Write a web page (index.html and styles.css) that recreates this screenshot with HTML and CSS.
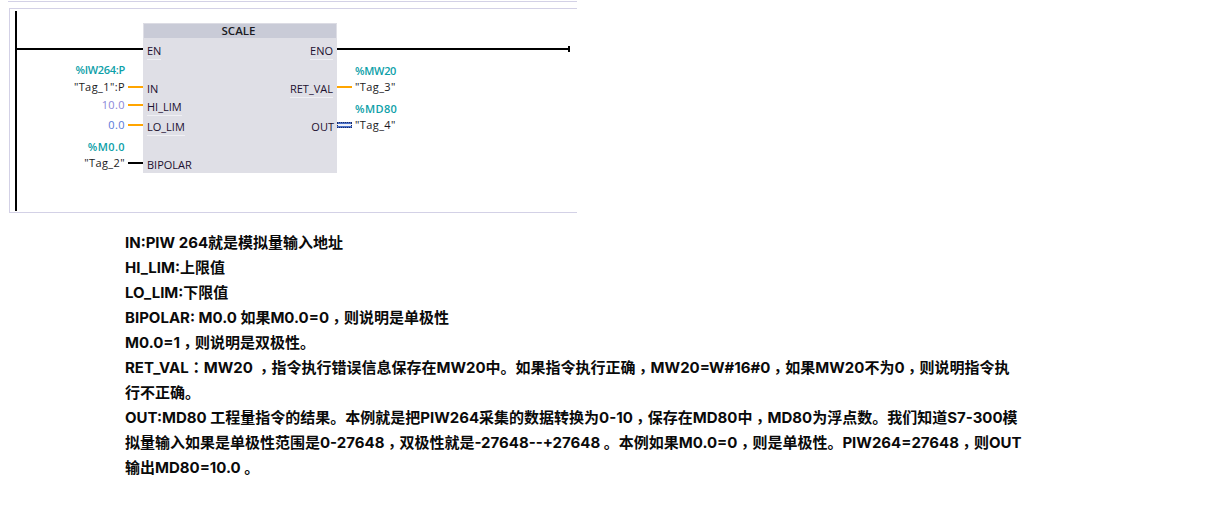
FILE: index.html
```html
<!DOCTYPE html>
<html lang="zh-CN">
<head>
<meta charset="utf-8">
<title>SCALE</title>
<link rel="stylesheet" href="styles.css">
</head>
<body>
<section class="diagram">
  <div class="topline"></div>
  <div class="frame"></div>
  <div class="rail"></div>
  <div class="wire wire-en"></div>
  <div class="wire wire-eno"></div>
  <div class="cap"></div>

  <div class="block">
    <div class="block-title">SCALE</div>
  </div>

  <span class="pin u" style="left:147px;top:44px">EN</span>
  <span class="pin" style="left:147px;top:82px">IN</span>
  <span class="pin u" style="left:147px;top:100px">HI_LIM</span>
  <span class="pin u" style="left:147px;top:120px">LO_LIM</span>
  <span class="pin" style="left:147px;top:158px">BIPOLAR</span>
  <span class="pin u" style="right:876px;top:44px">ENO</span>
  <span class="pin u" style="right:876px;top:82px">RET_VAL</span>
  <span class="pin" style="right:875px;top:120px">OUT</span>

  <div class="stub orange" style="left:128px;top:86px"></div>
  <div class="stub orange" style="left:128px;top:104px"></div>
  <div class="stub orange" style="left:128px;top:124px"></div>
  <div class="stub black" style="left:128px;top:162px"></div>
  <div class="stub orange" style="left:337px;top:86px"></div>
  <div class="stub real" style="left:337px;top:122px"></div>

  <span class="lab addr tight lab-l" style="top:63px">%IW264:P</span>
  <span class="lab tag lab-l" style="top:80px">"Tag_1":P</span>
  <span class="lab const1 lab-l" style="top:98px">10.0</span>
  <span class="lab const2 lab-l" style="top:118px">0.0</span>
  <span class="lab addr lab-l" style="top:140px">%M0.0</span>
  <span class="lab tag lab-l" style="top:156px">"Tag_2"</span>
  <span class="lab addr tight lab-r" style="top:64px">%MW20</span>
  <span class="lab tag lab-r" style="top:80px">"Tag_3"</span>
  <span class="lab addr lab-r" style="top:102px">%MD80</span>
  <span class="lab tag lab-r" style="top:118px">"Tag_4"</span>
</section>
<main class="notes">
  <p>IN:PIW 264就是模拟量输入地址</p>
  <p>HI_LIM:上限值</p>
  <p>LO_LIM:下限值</p>
  <p>BIPOLAR: M0.0 如果M0.0=0<span class="punct comma" lang="zh-TW">，</span>则说明是单极性</p>
  <p>M0.0=1<span class="punct comma" lang="zh-TW">，</span>则说明是双极性。</p>
  <p>RET_VAL<span class="punct" lang="zh-TW">：</span>MW20 <span class="punct comma" lang="zh-TW">，</span>指令执行错误信息保存在MW20中。如果指令执行正确<span class="punct comma" lang="zh-TW">，</span>MW20=W#16#0<span class="punct comma" lang="zh-TW">，</span>如果MW20不为0<span class="punct comma" lang="zh-TW">，</span>则说明指令执<br>行不正确。</p>
  <p>OUT:MD80 工程量指令的结果。本例就是把PIW264采集的数据转换为0-10<span class="punct comma" lang="zh-TW">，</span>保存在MD80中<span class="punct comma" lang="zh-TW">，</span>MD80为浮点数。我们知道S7-300模<br>拟量输入如果是单极性范围是0-27648<span class="punct comma" lang="zh-TW">，</span>双极性就是-27648--+27648 。本例如果M0.0=0<span class="punct comma" lang="zh-TW">，</span>则是单极性。PIW264=27648<span class="punct comma" lang="zh-TW">，</span>则OUT<br>输出MD80=10.0 。</p>
</main>
</body>
</html>
```
FILE: styles.css
```css
*, *::before, *::after { box-sizing: border-box; }
html, body { margin: 0; padding: 0; background: #fff; }
body { width: 1209px; height: 510px; overflow: hidden; font-family: "Noto Sans", "Noto Sans CJK SC", sans-serif; }
.diagram { position: relative; width: 1209px; height: 213px; }
.topline { position: absolute; left: 8px; top: 1px; width: 569px; height: 1px; background: #d3d1e6; }
.frame { position: absolute; left: 9px; top: 8px; width: 568px; height: 205px; border: 1px solid #d3d1e6; border-right: 0; }
.rail { position: absolute; left: 15px; top: 11px; width: 2px; height: 200px; background: #000; }
.wire { position: absolute; height: 2px; background: #000; top: 48px; }
.wire-en { left: 17px; width: 126px; }
.wire-eno { left: 337px; width: 232px; }
.cap { position: absolute; left: 568px; top: 46px; width: 2px; height: 6px; background: #000; }
.block { position: absolute; left: 143px; top: 23px; width: 194px; height: 150px; background: #dfdfe6; border-top: 1px solid #dcdce4; }
.block-title { height: 14px; margin: 0 1px; padding-right: 3px; background: #c9cbd7; font: 600 11.5px/14px "Open Sans", sans-serif; text-align: center; color: #1a1a22; }
.pin { position: absolute; font: 400 11px/14px "Open Sans", sans-serif; color: #1c1030; }
.pin.u { box-shadow: 0 1px 0 #f0f0f4; padding-bottom: 1px; }
.stub { position: absolute; width: 15px; height: 2px; }
.orange { background: #ffa500; }
.black { background: #000; }
.real { height: 6px; background: linear-gradient(#4a70c8 0 25%, #eef1fa 25% 75%, #4a70c8 75%); border: 1px dotted #1a2a66; }
.lab { position: absolute; font: 400 11px/14px "Open Sans", sans-serif; white-space: nowrap; letter-spacing: .4px; }
.lab-l { right: 1084px; }
.lab-r { left: 355px; }
.addr { color: #0ca0a8; font-weight: 600; }
.tight { letter-spacing: -.3px; }
.tag { color: #1a1a22; }
.const1 { color: #8a86d8; }
.const2 { color: #5878d8; }
.notes { margin: 17px 0 0 125px; width: 920px; font: 700 15px/25px Inter, "Noto Sans CJK SC", sans-serif; color: #0a0a0a; }
.notes p { margin: 0; }
.punct { font-family: "Noto Sans CJK TC", sans-serif; line-height: 0; }
.comma { vertical-align: -4px; }
```
